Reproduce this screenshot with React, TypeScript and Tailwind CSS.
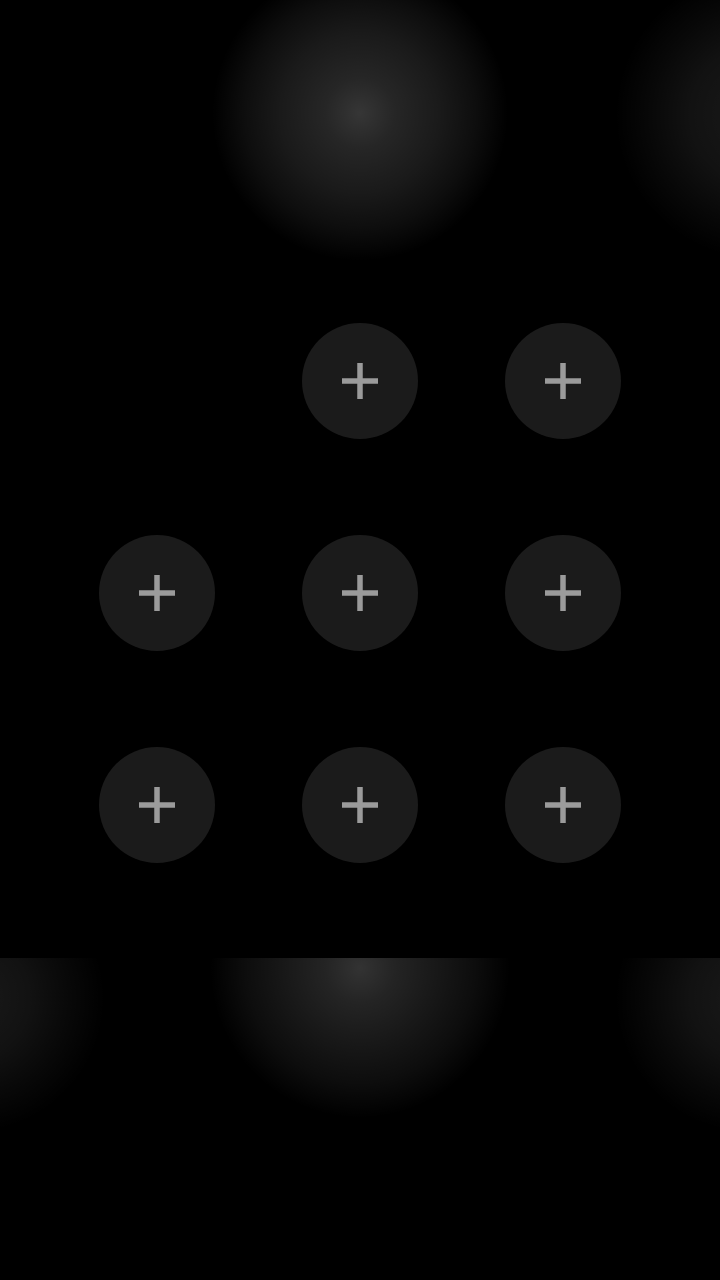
// slots of the grid, first one is empty
const slots = [false, true, true, true, true, true, true, true, true];

function AddButton() {
    return (
        <button className="w-[116px] h-[116px] rounded-full bg-[#1b1b1b] flex items-center justify-center">
            <svg width="38" height="38" viewBox="0 0 38 38" fill="none">
                <path d="M19 1v36M1 19h36" stroke="#9b9b9b" strokeWidth="5.5" />
            </svg>
        </button>
    );
}

export default function App() {
    return (
        <div className="min-h-screen w-[720px] bg-black flex flex-col">
            {/* panel superior con la cuadricula */}
            <section className="h-[958px] pt-[323px] bg-black bg-[radial-gradient(circle_at_360px_113px,rgba(255,255,255,0.21)_0,rgba(255,255,255,0.15)_35px,rgba(255,255,255,0.1)_80px,rgba(255,255,255,0.055)_115px,transparent_148px),radial-gradient(circle_at_760px_115px,rgba(255,255,255,0.1)_0,rgba(255,255,255,0.07)_70px,rgba(255,255,255,0.03)_110px,transparent_145px)]">
                <div className="mx-auto w-[522px] grid grid-cols-3 gap-x-[87px] gap-y-[96px]">
                    {slots.map((filled, i) =>
                        filled ? <AddButton key={i} /> : <div key={i} className="w-[116px] h-[116px]" />
                    )}
                </div>
            </section>
            {/* panel inferior */}
            <section className="h-[322px] bg-black bg-[radial-gradient(circle_at_360px_10px,rgba(255,255,255,0.2)_0,rgba(255,255,255,0.14)_35px,rgba(255,255,255,0.09)_80px,rgba(255,255,255,0.05)_115px,transparent_150px),radial-gradient(circle_at_-30px_40px,rgba(255,255,255,0.1)_0,rgba(255,255,255,0.07)_60px,rgba(255,255,255,0.03)_100px,transparent_135px),radial-gradient(circle_at_750px_40px,rgba(255,255,255,0.1)_0,rgba(255,255,255,0.07)_60px,rgba(255,255,255,0.03)_100px,transparent_135px)]" />
        </div>
    );
}
